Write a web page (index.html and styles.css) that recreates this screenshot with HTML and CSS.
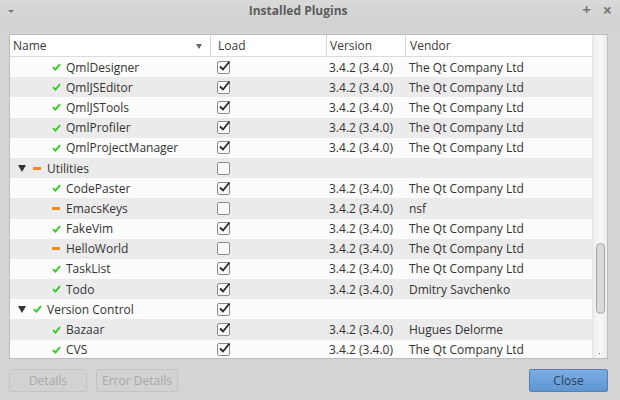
FILE: index.html
```html
<!DOCTYPE html>
<html>
<head>
<meta charset="utf-8">
<link rel="stylesheet" href="styles.css">
</head>
<body>
<div class="window">
  <div class="titlebar">
    <span class="tb-menu"></span>
    <span class="tb-title">Installed Plugins</span>
    <span class="tb-btns"><span class="tb-plus">+</span><span class="tb-close">×</span></span>
  </div>
  <div class="tree">
    <div class="table">
      <div class="row head">
        <div class="c name">Name<span class="sort"></span></div>
        <div class="c load">Load</div>
        <div class="c ver">Version</div>
        <div class="c vend">Vendor</div>
      </div>
      <div class="body" id="body"></div>
    </div>
    <div class="scrollbar"><div class="thumb"></div><span class="dot"></span></div>
  </div>
  <div class="buttons">
    <button class="btn dis">Details</button>
    <button class="btn dis wide">Error Details</button>
    <span class="spacer"></span>
    <button class="btn primary">Close</button>
  </div>
</div>
<script src="app.js"></script>
</body>
</html>
```
FILE: app.js
```js
const rows = [
  ["c","ok","QmlDesigner",1,"3.4.2 (3.4.0)","The Qt Company Ltd"],
  ["c","ok","QmlJSEditor",1,"3.4.2 (3.4.0)","The Qt Company Ltd"],
  ["c","ok","QmlJSTools",1,"3.4.2 (3.4.0)","The Qt Company Ltd"],
  ["c","ok","QmlProfiler",1,"3.4.2 (3.4.0)","The Qt Company Ltd"],
  ["c","ok","QmlProjectManager",1,"3.4.2 (3.4.0)","The Qt Company Ltd"],
  ["g","part","Utilities",0,"",""],
  ["c","ok","CodePaster",1,"3.4.2 (3.4.0)","The Qt Company Ltd"],
  ["c","part","EmacsKeys",0,"3.4.2 (3.4.0)","nsf"],
  ["c","ok","FakeVim",1,"3.4.2 (3.4.0)","The Qt Company Ltd"],
  ["c","part","HelloWorld",0,"3.4.2 (3.4.0)","The Qt Company Ltd"],
  ["c","ok","TaskList",1,"3.4.2 (3.4.0)","The Qt Company Ltd"],
  ["c","ok","Todo",1,"3.4.2 (3.4.0)","Dmitry Savchenko"],
  ["g","ok","Version Control",1,"",""],
  ["c","ok","Bazaar",1,"3.4.2 (3.4.0)","Hugues Delorme"],
  ["c","ok","CVS",1,"3.4.2 (3.4.0)","The Qt Company Ltd"]
];
const okSvg = '<svg class="ic" width="9" height="8" viewBox="0 0 9 8"><path d="M1 4.2 L3.4 6.6 L8 1.2" fill="none" stroke="#2fcf1f" stroke-width="1.9"/></svg>';
const partSvg = '<span class="dash"></span>';
const chk = '<span class="cb"><svg width="14" height="14" viewBox="0 0 14 14"><path d="M3 6.5 L6 9.5 L12.5 1.5" fill="none" stroke="#2a2a2a" stroke-width="1.8"/></svg></span>';
const unchk = '<span class="cb"></span>';
const body = document.getElementById("body");
body.innerHTML = rows.map((r, i) => `
<div class="row ${i % 2 ? "alt" : ""}">
  <div class="c name ${r[0] === "g" ? "grp" : "child"}">${r[0] === "g" ? '<span class="tri"></span>' : ""}${r[1] === "ok" ? okSvg : partSvg}<span class="t">${r[2]}</span></div>
  <div class="c load">${r[3] ? chk : unchk}</div>
  <div class="c ver">${r[4]}</div>
  <div class="c vend">${r[5]}</div>
</div>`).join("");
```
FILE: styles.css
```css
* { box-sizing: border-box; }
html, body { margin: 0; padding: 0; }
body { width: 620px; height: 400px; overflow: hidden; }
.window {
  width: 620px; height: 400px;
  background: #d4d4d4;
  font-family: "Open Sans", "Noto Sans", sans-serif;
  font-size: 12px;
  color: #333;
  display: flex; flex-direction: column;
}
.titlebar {
  height: 25px;
  display: flex; align-items: center;
  padding: 0 8px;
  position: relative;
  background: linear-gradient(#d9d9d9, #d2d2d2);
}
.tb-menu {
  width: 0; height: 0;
  border-left: 3px solid transparent; border-right: 3px solid transparent;
  border-top: 3px solid #777;
  margin-left: 0px; margin-top: -3px;
}
.tb-title {
  flex: 1; text-align: center;
  font-weight: bold; color: #5c5c5c; font-size: 12px;
  margin-top: -5px;
}
.tb-btns { display: flex; gap: 12px; color: #777; font-size: 15px; font-weight: bold; margin-top: -6px; }
.tb-close { font-size: 16px; }
.tree {
  margin: 9px 12px 0 9px;
  height: 325px;
  border: 1px solid #bdbdbd;
  background: #fcfcfc;
  display: flex;
}
.table { flex: 1; display: flex; flex-direction: column; overflow: hidden; }
.row {
  display: grid;
  grid-template-columns: 200px 116px 79px 1fr;
  height: 20.2px;
  align-items: center;
  background: #fcfcfc;
  flex-shrink: 0;
}
.row.alt { background: #ebebeb; }
.row.head {
  height: 22px;
  background: #fff;
  border-bottom: 1px solid #dcdcdc;
  color: #3a3a3a;
}
.head .c { height: 100%; display: flex; align-items: center; padding-left: 4px; border-left: 1px solid #d8d8d8; }
.head .c.name { border-left: none; padding-left: 3px; position: relative; }
.sort {
  position: absolute; right: 8px; top: 9px;
  border-left: 3.5px solid transparent; border-right: 3.5px solid transparent;
  border-top: 5px solid #666;
}
.c { white-space: nowrap; overflow: hidden; }
.c.name { display: flex; align-items: center; }
.c.name.child { padding-left: 42px; }
.c.name.grp { padding-left: 8px; }
.tri {
  width: 0; height: 0;
  border-left: 4px solid transparent; border-right: 4px solid transparent;
  border-top: 7px solid #333;
  margin-right: 7px;
}
.ic { display: block; margin-right: 5px; }
.dash { display: block; width: 8px; height: 3px; background: #f28a1e; margin-right: 6px; }
.c.load { padding-left: 7px; display: flex; align-items: center; }
.cb {
  position: relative;
  width: 13px; height: 13px;
  border: 1px solid #8c8c8c; border-radius: 2px;
  background: #fafafa;
}
.cb svg { position: absolute; left: -1px; top: -2px; }
.c.ver { padding-left: 3px; }
.c.vend { padding-left: 4px; }
.scrollbar {
  width: 15px; position: relative;
  background: linear-gradient(90deg, #ececec, #f8f8f8 50%, #ececec);
  border-left: 1px solid #e4e4e4;
}
.thumb {
  position: absolute; left: 3px; top: 208px;
  width: 9px; height: 71px;
  border: 1px solid #a4a4a4; border-radius: 5px;
  background: #d9d9d9;
}
.dot { position: absolute; left: 6px; bottom: 4px; width: 1px; height: 1px; background: #666; }
.buttons {
  display: flex; align-items: center;
  padding: 0 12px 0 9px;
  margin-top: 10px;
  gap: 9px;
}
.spacer { flex: 1; }
.btn {
  height: 23px;
  font-family: "Open Sans", "Noto Sans", sans-serif;
  font-size: 12px;
  border-radius: 2px;
  padding: 0;
}
.btn.dis {
  width: 78px;
  border: 1px solid #c4c4c4;
  background: #d2d2d2;
  color: #a8a8a8;
}
.btn.wide { width: 82px; }
.btn.primary {
  width: 79px;
  border: 1px solid #5a7fb0;
  background: linear-gradient(#7aaee4, #5f96d2);
  color: #2b3e56;
}
```
